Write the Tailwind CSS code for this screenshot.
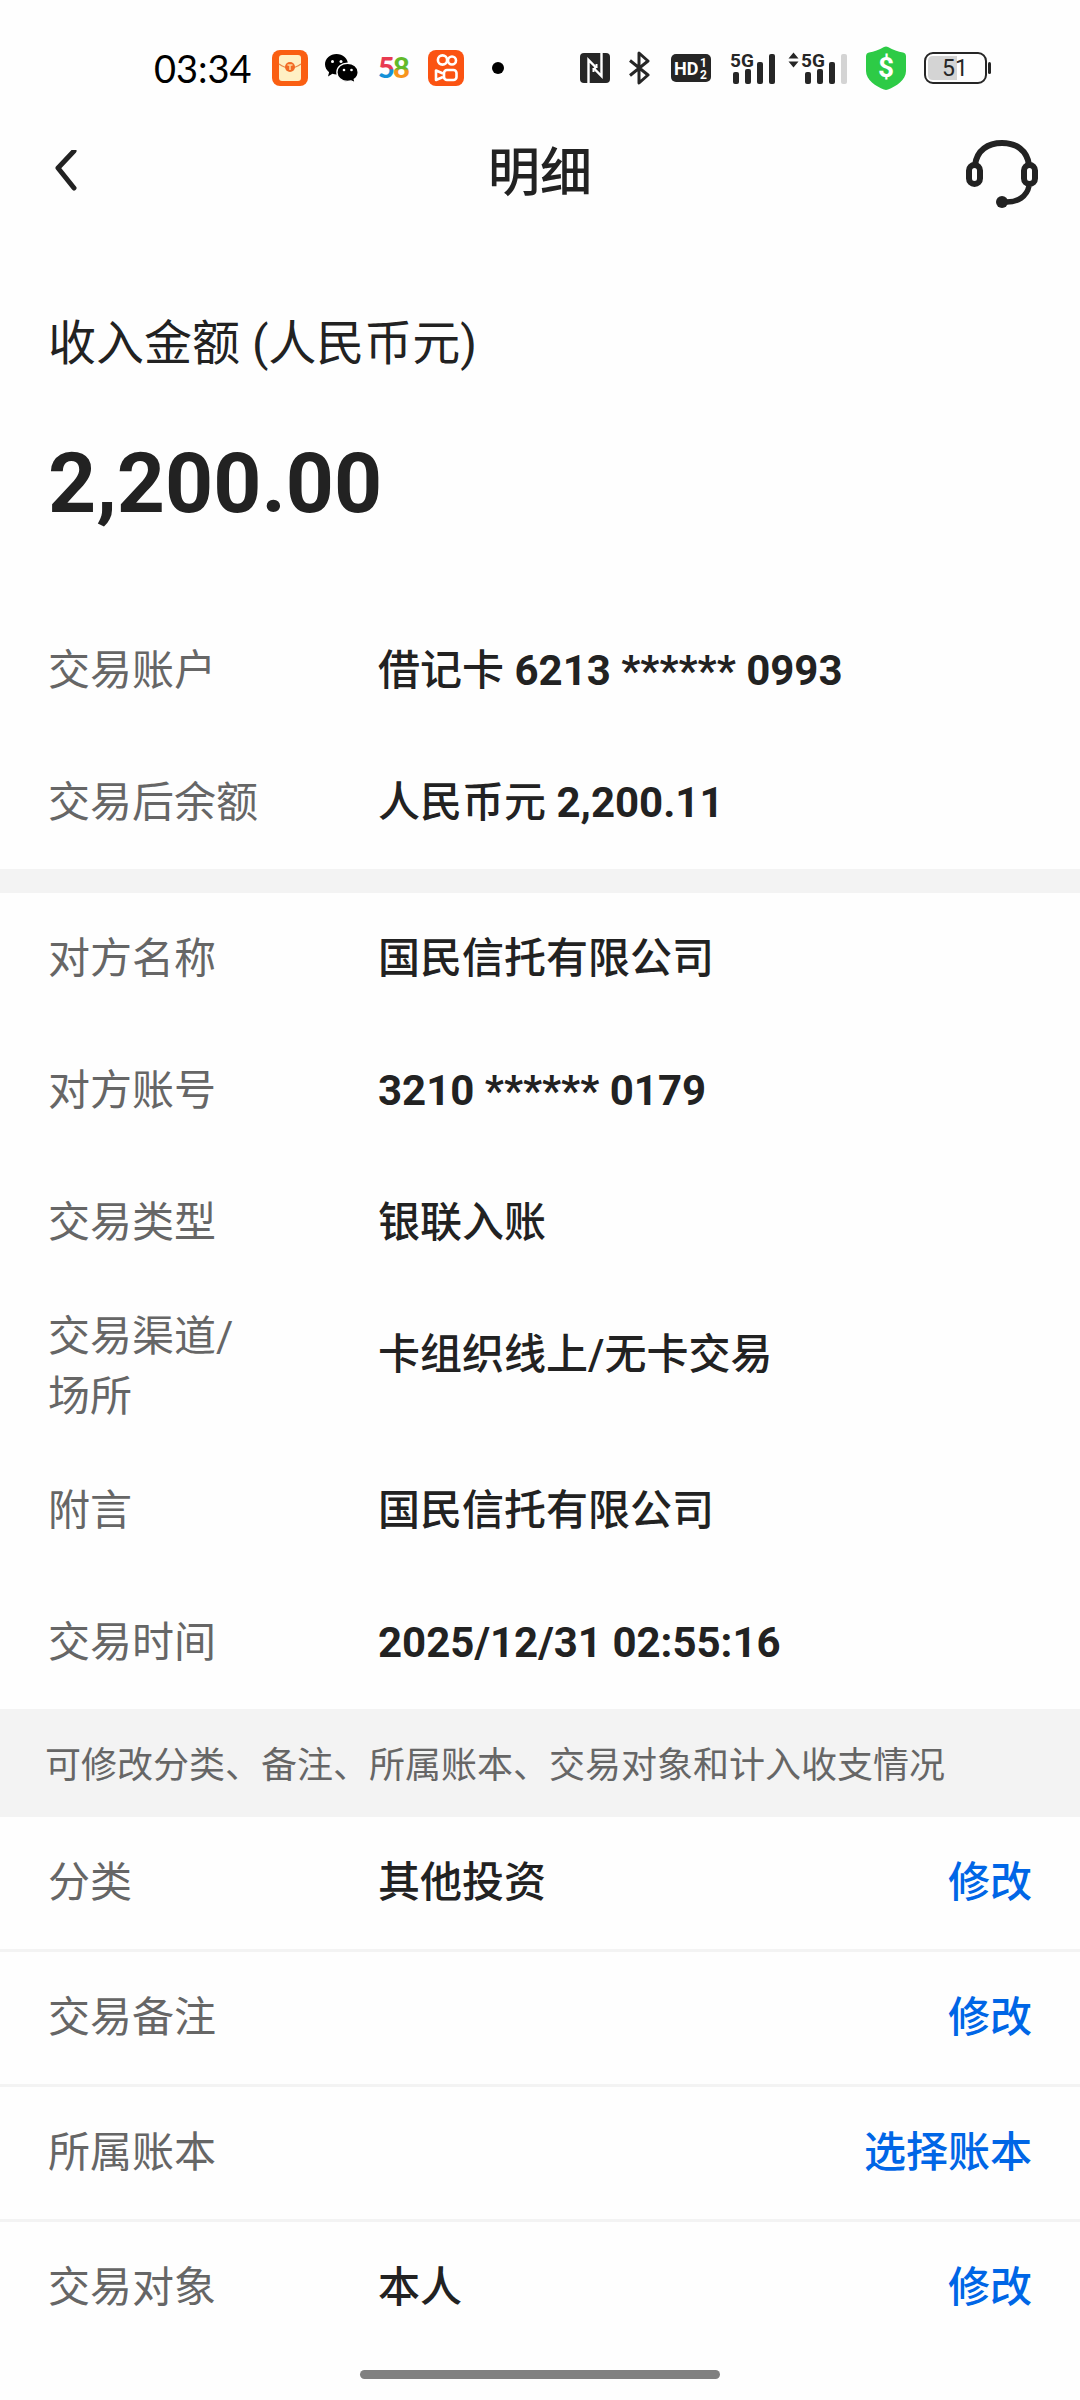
<!DOCTYPE html>
<html lang="zh-CN">
<head>
<meta charset="utf-8">
<meta name="viewport" content="width=device-width, initial-scale=1">
<title>明细</title>
<script src="https://cdn.jsdelivr.net/npm/@tailwindcss/browser@4"></script>
</head>
<body class="flex min-h-screen flex-col bg-[#fefefe] font-[Roboto,'Noto_Sans_CJK_SC',sans-serif] text-[42px] text-[#222222]">

<!-- status bar -->
<div class="flex h-[136px] items-center justify-between pr-[88px] pl-[154px]">
  <div class="flex items-center gap-4">
    <span class="mr-1 font-[Lato,sans-serif] text-[38px] leading-none text-black">03:34</span>
    <svg class="size-9" viewBox="0 0 36 36" aria-hidden="true">
      <rect width="36" height="36" rx="8" fill="#fa5f12"/>
      <rect x="7" y="5" width="22" height="26" rx="3" fill="#fff0c4"/>
      <path d="M7 14q11 8 22 0" fill="none" stroke="#e8894a" stroke-width="1.500"/>
      <circle cx="18" cy="17" r="5" fill="#f26a24"/>
      <path d="M15.500 15h5M18 15v5" stroke="#ffd79a" stroke-width="1.500"/>
    </svg>
    <svg class="size-9" viewBox="0 0 36 36" aria-hidden="true">
      <path d="M12.500 4C6.200 4 1 8.500 1 14.300c0 3.200 1.600 6 4.100 7.900L4 26.500l4.400-2.700c1.300.4 2.700.6 4.100.6C18.800 24.400 24 20 24 14.300S18.800 4 12.500 4z"/>
      <path d="M23.500 13.200c-5.900 0-10.600 4-10.600 9 0 5.100 4.700 9.200 10.600 9.200 1.300 0 2.500-.2 3.600-.5l4.200 2.100-1-3.700c2.400-1.600 3.900-4.200 3.900-7.100 0-5-4.800-9-10.700-9z" stroke="#fff" stroke-width="1.400"/>
      <g fill="#fff"><circle cx="8.500" cy="11.500" r="1.500"/><circle cx="17" cy="11.500" r="1.500"/><circle cx="20" cy="20" r="1.300"/><circle cx="27.500" cy="20" r="1.300"/></g>
    </svg>
    <svg class="h-11 w-9" viewBox="0 -4 36 44" role="img" aria-label="58">
      <defs>
        <linearGradient id="five" x1="0" y1="0" x2="0" y2="1"><stop offset=".56" stop-color="#e83a50"/><stop offset=".6" stop-color="#1590d8"/></linearGradient>
        <linearGradient id="eight" x1="0" y1="0" x2="0" y2="1"><stop offset=".56" stop-color="#62b92a"/><stop offset=".62" stop-color="#f7941d"/></linearGradient>
      </defs>
      <g font-family="Lato" font-weight="900" font-size="29">
        <text x="2" y="28" fill="url(#five)">5</text>
        <text x="17" y="28" fill="url(#eight)">8</text>
      </g>
    </svg>
    <svg class="size-9" viewBox="0 0 36 36" aria-hidden="true">
      <rect width="36" height="36" rx="8" fill="#fb5312"/>
      <g fill="none" stroke="#fff" stroke-width="2.600">
        <circle cx="14.500" cy="10" r="4.600"/><circle cx="24" cy="10.500" r="4"/>
        <rect x="16" y="20" width="12.500" height="10" rx="3"/>
        <path d="M15 23.500l-7-3v9.500L15 27" stroke-linejoin="round"/>
      </g>
    </svg>
    <svg class="size-9" viewBox="0 0 36 36" aria-hidden="true"><circle cx="18" cy="18" r="6"/></svg>
  </div>
  <div class="flex items-center gap-[18px]">
    <svg class="h-[30px] w-[30px]" viewBox="0 0 30 30" aria-hidden="true">
      <rect width="30" height="30" rx="4" fill="#262626"/>
      <path d="M8.500 30V7l8 8M21.500 0v23l-8-8" fill="none" stroke="#fff" stroke-width="2.400"/>
      <path d="M16.500 15v-4M13.500 15v4" fill="none" stroke="#fff" stroke-width="2"/>
    </svg>
    <svg class="h-[34px] w-6" viewBox="0 0 24 34" aria-hidden="true">
      <path d="M2 9.500l18 14.500-9 8V2l9 8L2 24.500" fill="none" stroke="#262626" stroke-width="3" stroke-linejoin="round"/>
    </svg>
    <svg class="h-7 w-[42px]" viewBox="0 0 42 28" role="img" aria-label="HD">
      <rect x="1" width="40" height="28" rx="5" fill="#262626"/>
      <g fill="#fff" font-family="Roboto" font-weight="700"><text x="4" y="21" font-size="18">HD</text><text x="30" y="13" font-size="12">1</text><text x="30" y="25" font-size="12">2</text></g>
    </svg>
    <svg class="h-11 w-[118px]" viewBox="0 -6 118 44" role="img" aria-label="5G">
      <g fill="#262626">
        <text x="0" y="15" font-family="Roboto" font-weight="700" font-size="19">5G</text>
        <rect x="3" y="20" width="6" height="12" rx="2"/><rect x="15" y="17" width="6" height="15" rx="2"/><rect x="27" y="10" width="6" height="22" rx="2"/><rect x="39" y="2" width="6" height="30" rx="2"/>
        <path d="M58.500 6.500l5-6 5 6zM58.500 9.500l5 6 5-6z"/>
        <text x="71" y="15" font-family="Roboto" font-weight="700" font-size="19">5G</text>
        <rect x="75" y="20" width="6" height="12" rx="2"/><rect x="87" y="17" width="6" height="15" rx="2"/><rect x="99" y="10" width="6" height="22" rx="2"/>
      </g>
      <rect x="111" y="2" width="6" height="30" rx="2" fill="#d4d4d4"/>
    </svg>
    <svg class="h-11 w-10" viewBox="0 0 40 44" role="img" aria-label="$">
      <path d="M18 1q2-1 4 0c5 3 10 4.500 15 5.500q3 .5 3 4V25c0 9-10 15.500-18 18.500q-2 .8-4 0C10 40.500 0 34 0 25V10.500Q0 7 3 6.500C8 5.500 13 4 18 1z" fill="#2dcb46"/>
      <text x="20" y="31" text-anchor="middle" font-family="Roboto" font-weight="700" font-size="28" fill="#fff">$</text>
    </svg>
    <svg class="h-8 w-[68px]" viewBox="0 0 68 32" role="img" aria-label="51%">
      <path d="M9 4h24v24H9q-5 0-5-5V9q0-5 5-5z" fill="#d4d4d4"/>
      <rect x="1" y="1" width="61" height="30" rx="8" fill="none" stroke="#262626" stroke-width="2"/>
      <rect x="64" y="10" width="3" height="12" rx="1.500" fill="#262626"/>
      <text x="31" y="24" text-anchor="middle" font-family="Roboto" font-size="23" fill="#262626">51</text>
    </svg>
  </div>
</div>

<!-- title bar -->
<header class="flex h-[76px] items-center justify-between px-10">
  <button type="button" aria-label="返回" class="flex w-[74px]">
    <svg class="h-12 w-12" viewBox="0 0 48 48" aria-hidden="true"><path d="M34 3L18 20l16 20" transform="translate(0 -2)" fill="none" stroke="#222" stroke-width="5" stroke-linecap="round" stroke-linejoin="round"/></svg>
  </button>
  <h1 class="text-[52px] leading-[76px] font-medium">明细</h1>
  <button type="button" aria-label="客服" class="flex w-[74px]">
    <svg class="h-[70px] w-[74px]" viewBox="1 1 74 70" aria-hidden="true">
      <g fill="none" stroke="#222">
        <path d="M10 27C12 12 23 5 37 5s25 7 27 22" stroke-width="6"/>
        <rect x="4" y="27" width="11" height="19" rx="5.500" stroke-width="6"/>
        <rect x="59" y="27" width="11" height="19" rx="5.500" stroke-width="6"/>
        <path d="M64 48C62 58 53 65 39 64" stroke-width="5.500"/>
      </g>
      <circle cx="37" cy="64" r="6" fill="#222"/>
    </svg>
  </button>
</header>

<main>
  <section class="px-12 pt-24 pb-[73px]">
    <h2 class="text-[48px] leading-[72px]">收入金额 (人民币元)</h2>
    <p class="mt-14 text-[84px] leading-[96px] font-bold">2,200.00</p>
  </section>

  <dl class="border-b-[24px] border-[#f3f3f3]">
    <div class="flex min-h-[132px] items-center gap-[120px] px-12">
      <dt class="w-[210px] shrink-0 py-[18px] leading-[60px] text-[#666666]">交易账户</dt>
      <dd class="self-start leading-[132px] font-medium">借记卡 <span class="font-bold">6213 ****** 0993</span></dd>
    </div>
    <div class="flex min-h-[132px] items-center gap-[120px] px-12">
      <dt class="w-[210px] shrink-0 py-[18px] leading-[60px] text-[#666666]">交易后余额</dt>
      <dd class="self-start leading-[132px] font-medium">人民币元 <span class="font-bold">2,200.11</span></dd>
    </div>
  </dl>

  <dl>
    <div class="flex min-h-[132px] items-center gap-[120px] px-12">
      <dt class="w-[210px] shrink-0 py-[18px] leading-[60px] text-[#666666]">对方名称</dt>
      <dd class="self-start leading-[132px] font-medium">国民信托有限公司</dd>
    </div>
    <div class="flex min-h-[132px] items-center gap-[120px] px-12">
      <dt class="w-[210px] shrink-0 py-[18px] leading-[60px] text-[#666666]">对方账号</dt>
      <dd class="self-start leading-[132px] font-bold">3210 ****** 0179</dd>
    </div>
    <div class="flex min-h-[132px] items-center gap-[120px] px-12">
      <dt class="w-[210px] shrink-0 py-[18px] leading-[60px] text-[#666666]">交易类型</dt>
      <dd class="self-start leading-[132px] font-medium">银联入账</dd>
    </div>
    <div class="flex min-h-[132px] items-center gap-[120px] px-12">
      <dt class="w-[210px] shrink-0 py-[18px] leading-[60px] text-[#666666]">交易渠道/<wbr>场所</dt>
      <dd class="self-start leading-[132px] font-medium">卡组织线上/无卡交易</dd>
    </div>
    <div class="flex min-h-[132px] items-center gap-[120px] px-12">
      <dt class="w-[210px] shrink-0 py-[18px] leading-[60px] text-[#666666]">附言</dt>
      <dd class="self-start leading-[132px] font-medium">国民信托有限公司</dd>
    </div>
    <div class="flex min-h-[132px] items-center gap-[120px] px-12">
      <dt class="w-[210px] shrink-0 py-[18px] leading-[60px] text-[#666666]">交易时间</dt>
      <dd class="self-start leading-[132px] font-bold">2025/12/31 02:55:16</dd>
    </div>
  </dl>

  <p class="bg-[#f3f3f3] px-[45px] pt-[27px] pb-[21px] text-[36px] leading-[60px] text-[#666666]">可修改分类、备注、所属账本、交易对象和计入收支情况</p>

  <ul class="divide-y-[3px] divide-[#f3f3f3] leading-[132px]">
    <li class="flex px-12">
      <span class="w-[330px] shrink-0 text-[#666666]">分类</span>
      <span class="grow font-medium">其他投资</span>
      <button type="button" class="font-medium text-[#0066e6]">修改</button>
    </li>
    <li class="flex px-12">
      <span class="w-[330px] shrink-0 grow text-[#666666]">交易备注</span>
      <button type="button" class="font-medium text-[#0066e6]">修改</button>
    </li>
    <li class="flex px-12">
      <span class="w-[330px] shrink-0 grow text-[#666666]">所属账本</span>
      <button type="button" class="font-medium text-[#0066e6]">选择账本</button>
    </li>
    <li class="flex px-12">
      <span class="w-[330px] shrink-0 text-[#666666]">交易对象</span>
      <span class="grow font-medium">本人</span>
      <button type="button" class="font-medium text-[#0066e6]">修改</button>
    </li>
  </ul>
</main>

<!-- home indicator -->
<div class="mx-auto mt-auto mb-[21px] h-[9px] w-1/3 rounded-full bg-[#808080]"></div>
</body>
</html>
